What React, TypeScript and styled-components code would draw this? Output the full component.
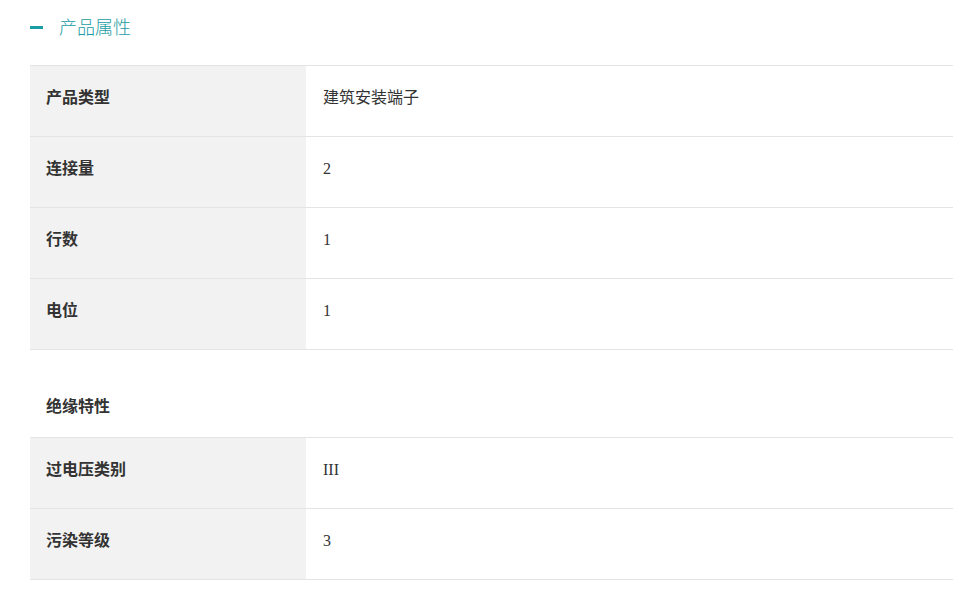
import React from 'react';
import styled, { createGlobalStyle } from 'styled-components';

const GlobalStyle = createGlobalStyle`
  body {
    margin: 0;
    background: #ffffff;
    font-family: "Noto Sans CJK SC", "Noto Sans", sans-serif;
    color: #333333;
  }
`;

const StPage = styled.div`
  padding: 8px 11px 0 30px;
`;

const StHeader = styled.div`
  display: flex;
  align-items: center;
  height: 36px;
  gap: 16px;
  margin-bottom: 21px;
`;

const StDash = styled.span`
  display: block;
  width: 13px;
  height: 3px;
  margin-top: 2px;
  background: #1a9ca4;
`;

const StTitle = styled.h2`
  margin: 0;
  font-size: 18px;
  font-weight: 300;
  color: #1a9ca4;
  line-height: 1;
`;

const StTable = styled.div`
  display: flex;
  flex-direction: column;
  border-top: 1px solid #e4e4e7;
`;

const StRow = styled.div`
  display: grid;
  grid-template-columns: 276px 1fr;
  height: 70px;
  border-bottom: 1px solid #e4e4e7;
`;

const StLabel = styled.div`
  display: flex;
  align-items: center;
  padding: 0 0 10px 16px;
  background: #f2f2f2;
  font-size: 16px;
  font-weight: 700;
  color: #333333;
`;

interface StValueProps {
  latin: boolean;
}

const StValue = styled.div<StValueProps>`
  display: flex;
  align-items: center;
  padding: ${(props) => (props.latin ? '0 0 7px 17px' : '0 0 10px 17px')};
  font-size: 16px;
  font-family: ${(props) =>
    props.latin ? '"Liberation Serif", serif' : '"Noto Sans CJK SC", sans-serif'};
  color: #333333;
`;

const StGroupTitle = styled.div`
  display: flex;
  align-items: flex-end;
  height: 76px;
  padding: 0 0 20px 16px;
  box-sizing: border-box;
  margin-top: 12px;
  font-size: 16px;
  font-weight: 700;
  color: #333333;
  border-bottom: 1px solid #e4e4e7;
`;

interface Attr {
  label: string;
  value: string;
}

const basic: Attr[] = [
  { label: '产品类型', value: '建筑安装端子' },
  { label: '连接量', value: '2' },
  { label: '行数', value: '1' },
  { label: '电位', value: '1' },
];

const insulation: Attr[] = [
  { label: '过电压类别', value: 'III' },
  { label: '污染等级', value: '3' },
];

const isAscii = (s: string) => /^[\x00-\x7f]*$/.test(s);

function Rows({ items }: { items: Attr[] }) {
  return (
    <>
      {items.map((item) => (
        <StRow key={item.label}>
          <StLabel>{item.label}</StLabel>
          <StValue latin={isAscii(item.value)}>{item.value}</StValue>
        </StRow>
      ))}
    </>
  );
}

export default function App() {
  return (
    <StPage>
      <GlobalStyle />
      <StHeader>
        <StDash />
        <StTitle>产品属性</StTitle>
      </StHeader>
      <StTable>
        <Rows items={basic} />
      </StTable>
      <StGroupTitle>绝缘特性</StGroupTitle>
      <Rows items={insulation} />
    </StPage>
  );
}
